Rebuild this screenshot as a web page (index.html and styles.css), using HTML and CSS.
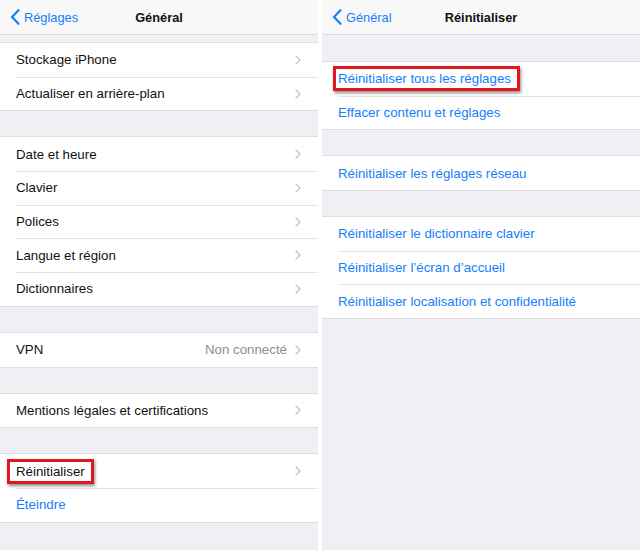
FILE: index.html
```html
<!DOCTYPE html>
<html lang="fr">
<head>
<meta charset="utf-8">
<title>Réglages</title>
<link rel="stylesheet" href="styles.css">
</head>
<body>
<div class="screen">
  <section class="panel">
    <header class="nav">
      <span class="back">
        <svg class="back-icon" width="10" height="16" viewBox="0 0 10 16"><path d="M8.5 1.2 L2 8 L8.5 14.8" fill="none" stroke="#157efb" stroke-width="2.2" stroke-linecap="round" stroke-linejoin="round"/></svg>
        Réglages
      </span>
      <h1 class="title">Général</h1>
    </header>

    <div class="group first-left">
      <div class="row"><span class="label">Stockage iPhone</span><svg class="chev" width="6" height="10" viewBox="0 0 6 10"><path d="M1 1 L5 5 L1 9" fill="none" stroke="#c4c4c9" stroke-width="1.4" stroke-linecap="round" stroke-linejoin="round"/></svg></div>
      <div class="row"><span class="label">Actualiser en arrière-plan</span><svg class="chev" width="6" height="10" viewBox="0 0 6 10"><path d="M1 1 L5 5 L1 9" fill="none" stroke="#c4c4c9" stroke-width="1.4" stroke-linecap="round" stroke-linejoin="round"/></svg></div>
    </div>

    <div class="group">
      <div class="row"><span class="label">Date et heure</span><svg class="chev" width="6" height="10" viewBox="0 0 6 10"><path d="M1 1 L5 5 L1 9" fill="none" stroke="#c4c4c9" stroke-width="1.4" stroke-linecap="round" stroke-linejoin="round"/></svg></div>
      <div class="row"><span class="label">Clavier</span><svg class="chev" width="6" height="10" viewBox="0 0 6 10"><path d="M1 1 L5 5 L1 9" fill="none" stroke="#c4c4c9" stroke-width="1.4" stroke-linecap="round" stroke-linejoin="round"/></svg></div>
      <div class="row"><span class="label">Polices</span><svg class="chev" width="6" height="10" viewBox="0 0 6 10"><path d="M1 1 L5 5 L1 9" fill="none" stroke="#c4c4c9" stroke-width="1.4" stroke-linecap="round" stroke-linejoin="round"/></svg></div>
      <div class="row"><span class="label">Langue et région</span><svg class="chev" width="6" height="10" viewBox="0 0 6 10"><path d="M1 1 L5 5 L1 9" fill="none" stroke="#c4c4c9" stroke-width="1.4" stroke-linecap="round" stroke-linejoin="round"/></svg></div>
      <div class="row"><span class="label">Dictionnaires</span><svg class="chev" width="6" height="10" viewBox="0 0 6 10"><path d="M1 1 L5 5 L1 9" fill="none" stroke="#c4c4c9" stroke-width="1.4" stroke-linecap="round" stroke-linejoin="round"/></svg></div>
    </div>

    <div class="group">
      <div class="row"><span class="label">VPN</span><span class="value">Non connecté</span><svg class="chev" width="6" height="10" viewBox="0 0 6 10"><path d="M1 1 L5 5 L1 9" fill="none" stroke="#c4c4c9" stroke-width="1.4" stroke-linecap="round" stroke-linejoin="round"/></svg></div>
    </div>

    <div class="group">
      <div class="row"><span class="label">Mentions légales et certifications</span><svg class="chev" width="6" height="10" viewBox="0 0 6 10"><path d="M1 1 L5 5 L1 9" fill="none" stroke="#c4c4c9" stroke-width="1.4" stroke-linecap="round" stroke-linejoin="round"/></svg></div>
    </div>

    <div class="group">
      <div class="row"><span class="label hl hl-left">Réinitialiser</span><svg class="chev" width="6" height="10" viewBox="0 0 6 10"><path d="M1 1 L5 5 L1 9" fill="none" stroke="#c4c4c9" stroke-width="1.4" stroke-linecap="round" stroke-linejoin="round"/></svg></div>
      <div class="row"><span class="label link">Éteindre</span></div>
    </div>
  </section>

  <section class="panel">
    <header class="nav">
      <span class="back">
        <svg class="back-icon" width="10" height="16" viewBox="0 0 10 16"><path d="M8.5 1.2 L2 8 L8.5 14.8" fill="none" stroke="#157efb" stroke-width="2.2" stroke-linecap="round" stroke-linejoin="round"/></svg>
        Général
      </span>
      <h1 class="title">Réinitialiser</h1>
    </header>

    <div class="group">
      <div class="row"><span class="label link hl hl-right">Réinitialiser tous les réglages</span></div>
      <div class="row"><span class="label link">Effacer contenu et réglages</span></div>
    </div>

    <div class="group">
      <div class="row"><span class="label link">Réinitialiser les réglages réseau</span></div>
    </div>

    <div class="group">
      <div class="row"><span class="label link">Réinitialiser le dictionnaire clavier</span></div>
      <div class="row"><span class="label link">Réinitialiser l’écran d’accueil</span></div>
      <div class="row"><span class="label link">Réinitialiser localisation et confidentialité</span></div>
    </div>
  </section>
</div>
</body>
</html>
```

FILE: styles.css
```css
* { box-sizing: border-box; }

html, body {
  margin: 0;
  padding: 0;
  background: #ffffff;
}

body {
  font-family: "Liberation Sans", Arial, sans-serif;
  font-size: 12.5px;
  color: #000;
}

.screen {
  display: flex;
  gap: 4px;
  width: 640px;
  height: 550px;
}

.panel {
  width: 318px;
  height: 550px;
  background: #efeff4;
  overflow: hidden;
}

.nav {
  position: relative;
  height: 35px;
  background: #f8f8f8;
  border-bottom: 1px solid #dcdce0;
  display: flex;
  align-items: center;
  justify-content: center;
}

.back {
  position: absolute;
  left: 10px;
  top: 0;
  height: 34px;
  display: flex;
  align-items: center;
  gap: 4px;
  font-size: 12.8px;
  color: #157efb;
}

.back-icon { display: block; }

.title {
  margin: 0;
  font-size: 12.8px;
  font-weight: 700;
  color: #111;
}

.group {
  margin-top: 27px;
  background: #fff;
  box-shadow: 0 -1px 0 #dedee2, 0 1px 0 #dedee2;
}

.group.first-left { margin-top: 8px; }

.row {
  position: relative;
  height: 33.7px;
  display: flex;
  align-items: center;
  padding: 0 17px 0 16px;
  font-size: 13.3px;
}

.row + .row::before {
  content: "";
  position: absolute;
  left: 16px;
  right: 0;
  top: 0;
  height: 1px;
  background: #e4e4e8;
}

.label {
  flex: 1 1 auto;
  white-space: nowrap;
  color: #111;
}

.label.link { color: #157efb; }

.value {
  color: #8e8e93;
  margin-right: 8px;
}

.chev { display: block; flex: none; }

.hl {
  position: relative;
  flex: 0 0 auto;
  margin-right: auto;
}

.hl::after {
  content: "";
  position: absolute;
  top: -5px;
  bottom: -5px;
  border: 3px solid #e3161c;
  box-shadow: 1px 2px 3px rgba(0, 0, 0, 0.45);
}

.hl-left::after { left: -9px; right: -9px; }
.hl-right::after { left: -5px; right: -9px; }
```
